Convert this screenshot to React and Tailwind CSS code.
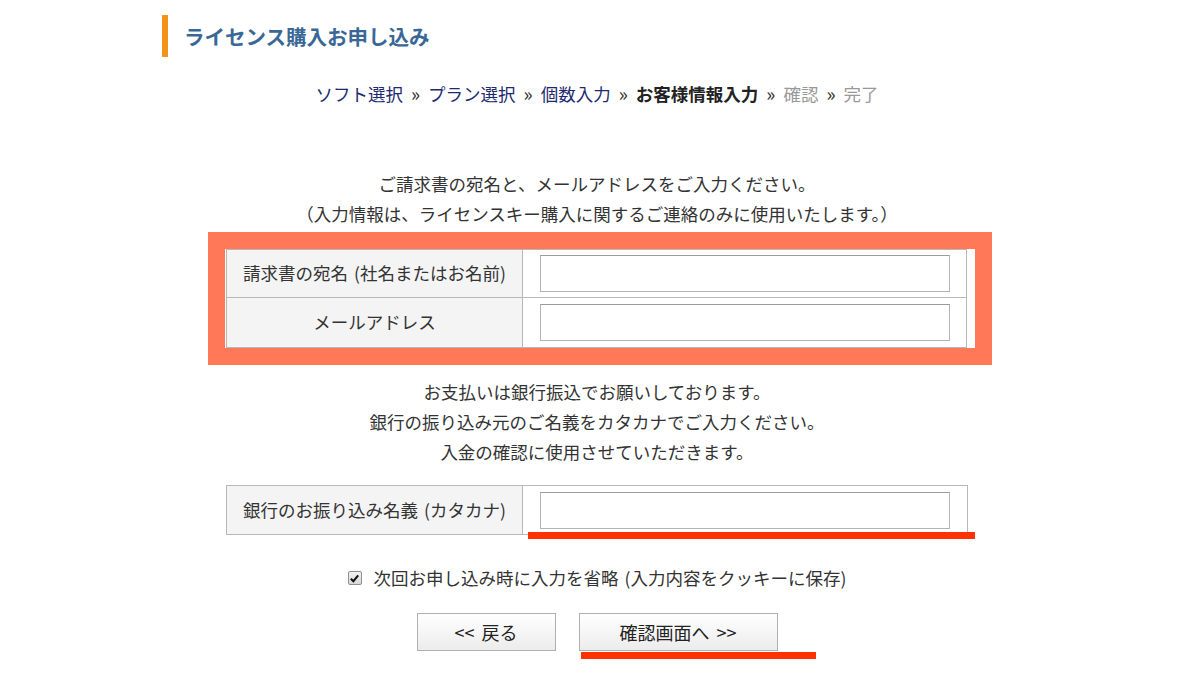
import React, { useState } from 'react';

const font = { fontFamily: '"Noto Sans CJK JP", "Noto Sans", sans-serif' };

const Sep = () => <span className="mx-[8px] text-[19px] text-[#333]">»</span>;

const TextBox = () => (
    <input
        type="text"
        className="w-[410px] h-[37px] border border-[#b4b4b4] border-t-[#9c9c9c] bg-white px-2 text-[16px] outline-none"
    />
);

const Row = ({ label, note, last, h }) => (
    <div className={`flex ${last ? '' : 'border-b border-[#b8b8b8]'}`}>
        <div className={`w-[296px] ${h} flex items-center justify-center bg-[#f4f4f4] border-r border-[#b8b8b8] text-[#333] whitespace-nowrap`}>
            {label}
            {note && <span className="ml-[6px]">{note}</span>}
        </div>
        <div className="flex-1 flex items-center pl-[17px] bg-white">
            <TextBox />
        </div>
    </div>
);

const App = () => {
    const [remember, setRemember] = useState(true);

    return (
        <div className="w-[1200px] h-[675px] bg-white text-[17.5px] text-[#333] overflow-hidden" style={font}>
            {/* page title */}
            <div className="pt-[15px] pl-[162px] flex items-center gap-[16px]">
                <div className="w-[6px] h-[42px] bg-[#f39419]"></div>
                <h1 className="text-[20.5px] font-bold text-[#3a6896] leading-none">ライセンス購入お申し込み</h1>
            </div>

            <div className="ml-[226px] w-[742px]">
                {/* steps */}
                <div className="mt-[21px] h-[30px] leading-[30px] text-center whitespace-nowrap">
                    <span className="text-[#1e2a70]">ソフト選択</span><Sep />
                    <span className="text-[#1e2a70]">プラン選択</span><Sep />
                    <span className="text-[#1e2a70]">個数入力</span><Sep />
                    <span className="font-bold text-[#222]">お客様情報入力</span><Sep />
                    <span className="text-[#999]">確認</span><Sep />
                    <span className="text-[#999]">完了</span>
                </div>

                <div className="mt-[61px] leading-[30px] text-center whitespace-nowrap">
                    <p>ご請求書の宛名と、メールアドレスをご入力ください。</p>
                    <p>（入力情報は、ライセンスキー購入に関するご連絡のみに使用いたします。）</p>
                </div>

                {/* highlighted block */}
                <div className="mt-[3px] -ml-[18px] w-[784px] border-[17px] border-[#ff7857] bg-white pl-px pr-[8px]">
                    <div className="border border-[#b8b8b8]">
                        <Row label="請求書の宛名" note="(社名またはお名前)" h="h-[47px]" />
                        <Row label="メールアドレス" h="h-[49px]" last />
                    </div>
                </div>

                <div className="mt-[12px] leading-[30px] text-center whitespace-nowrap">
                    <p>お支払いは銀行振込でお願いしております。</p>
                    <p>銀行の振り込み元のご名義をカタカナでご入力ください。</p>
                    <p>入金の確認に使用させていただきます。</p>
                </div>

                <div className="relative mt-[18px]">
                    <div className="border border-[#b8b8b8]">
                        <Row label="銀行のお振り込み名義" note="(カタカナ)" h="h-[48px]" last />
                    </div>
                    <div className="absolute left-[302px] top-[47px] w-[447px] h-[7px] bg-[#ff3100]"></div>
                </div>

                <label className="mt-[28px] h-[30px] flex items-center justify-center gap-[12px] whitespace-nowrap cursor-pointer">
                    <span
                        onClick={() => setRemember(!remember)}
                        className="w-[14px] h-[14px] border border-[#8f8f8f] rounded-[2px] bg-gradient-to-b from-[#f2f2f2] to-[#d8d8d8] flex items-center justify-center"
                    >
                        {remember && (
                            <svg viewBox="0 0 12 12" className="w-[11px] h-[11px]">
                                <path d="M2 6.2 L4.8 9 L10 2.6" fill="none" stroke="#111" strokeWidth="2.2" />
                            </svg>
                        )}
                    </span>
                    <span>次回お申し込み時に入力を省略<span className="ml-[6px]">(入力内容をクッキーに保存)</span></span>
                </label>

                <div className="mt-[20px] flex justify-center gap-[23px]">
                    <button className="w-[139px] h-[38px] border border-[#b0b0b0] bg-gradient-to-b from-white to-[#ececec] text-[18px] text-[#222]">
                        &lt;&lt;<span className="ml-[7px]">戻る</span>
                    </button>
                    <div className="relative">
                        <button className="w-[199px] h-[38px] border border-[#b0b0b0] bg-gradient-to-b from-white to-[#ececec] text-[18px] text-[#222]">
                            確認画面へ<span className="ml-[7px]">&gt;&gt;</span>
                        </button>
                        <div className="absolute left-[2px] top-[39px] w-[235px] h-[7px] bg-[#ff3100]"></div>
                    </div>
                </div>
            </div>
        </div>
    );
};

export default App;
